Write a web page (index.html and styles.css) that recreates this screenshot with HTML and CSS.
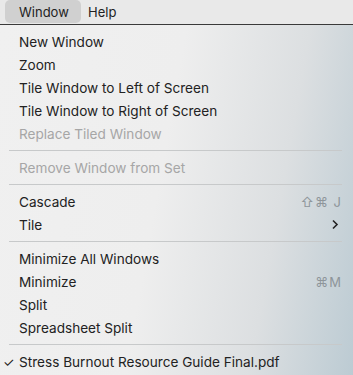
FILE: index.html
```html
<!DOCTYPE html>
<html lang="en">
<head>
    <meta charset="UTF-8">
    <title>Window menu</title>
    <link rel="stylesheet" href="styles.css">
</head>
<body>
<div class="menubar">
    <span class="bar-item active">Window</span>
    <span class="bar-item">Help</span>
</div>
<div class="menu">
    <div class="item">New Window</div>
    <div class="item">Zoom</div>
    <div class="item">Tile Window to Left of Screen</div>
    <div class="item">Tile Window to Right of Screen</div>
    <div class="item disabled">Replace Tiled Window</div>
    <div class="sep"></div>
    <div class="item disabled">Remove Window from Set</div>
    <div class="sep"></div>
    <div class="item">Cascade <span class="key">&#8679;&#8984; J</span></div>
    <div class="item">Tile
        <svg class="arrow" width="8" height="11" viewBox="0 0 8 11">
            <path d="M2 1.5 L6 5.5 L2 9.5" fill="none" stroke="#222" stroke-width="1.6"/>
        </svg>
    </div>
    <div class="sep"></div>
    <div class="item">Minimize All Windows</div>
    <div class="item">Minimize <span class="key">&#8984;M</span></div>
    <div class="item">Split</div>
    <div class="item">Spreadsheet Split</div>
    <div class="sep"></div>
    <div class="item checked"><span class="check">&#10003;</span>Stress Burnout Resource Guide Final.pdf</div>
</div>
</body>
</html>
```

FILE: styles.css
```css
* {
    margin: 0;
    padding: 0;
}

body {
    width: 353px;
    height: 375px;
    overflow: hidden;
    font-family: Inter, "Liberation Sans", sans-serif;
    font-size: 13.6px;
    color: #222;
    background: #efefef;
}

.menubar {
    height: 24px;
    display: flex;
    align-items: stretch;
    padding-left: 5px;
    background: #e9e9e9;
    border-bottom: 1px solid #3a3a3a;
    font-size: 13px;
}

.bar-item {
    display: flex;
    align-items: center;
    padding: 0 0 0 7px;
    height: 23px;
    border-radius: 5px;
}

.bar-item.active {
    background: #d0d0d0;
    width: 76px;
    padding-left: 14px;
    box-sizing: border-box;
}

.menu {
    height: 350px;
    padding-top: 5px;
    box-sizing: border-box;
    background: linear-gradient(100deg, #f0f0f0 0%, #eeeeee 45%, #dcdfe1 75%, #bccbd3 100%);
}

.item {
    height: 23px;
    display: flex;
    align-items: center;
    padding: 0 11px 0 19px;
    position: relative;
}

.item.disabled {
    color: #a6a6a6;
}

.key {
    margin-left: auto;
    color: #8e959a;
    font-size: 13px;
    letter-spacing: 1px;
}

.arrow {
    margin-left: auto;
    margin-right: 3px;
}

.check {
    position: absolute;
    left: 3px;
    font-size: 13px;
}

.sep {
    height: 1px;
    margin: 5px 11px 5px 9px;
    background: #c7c9ca;
}
```
